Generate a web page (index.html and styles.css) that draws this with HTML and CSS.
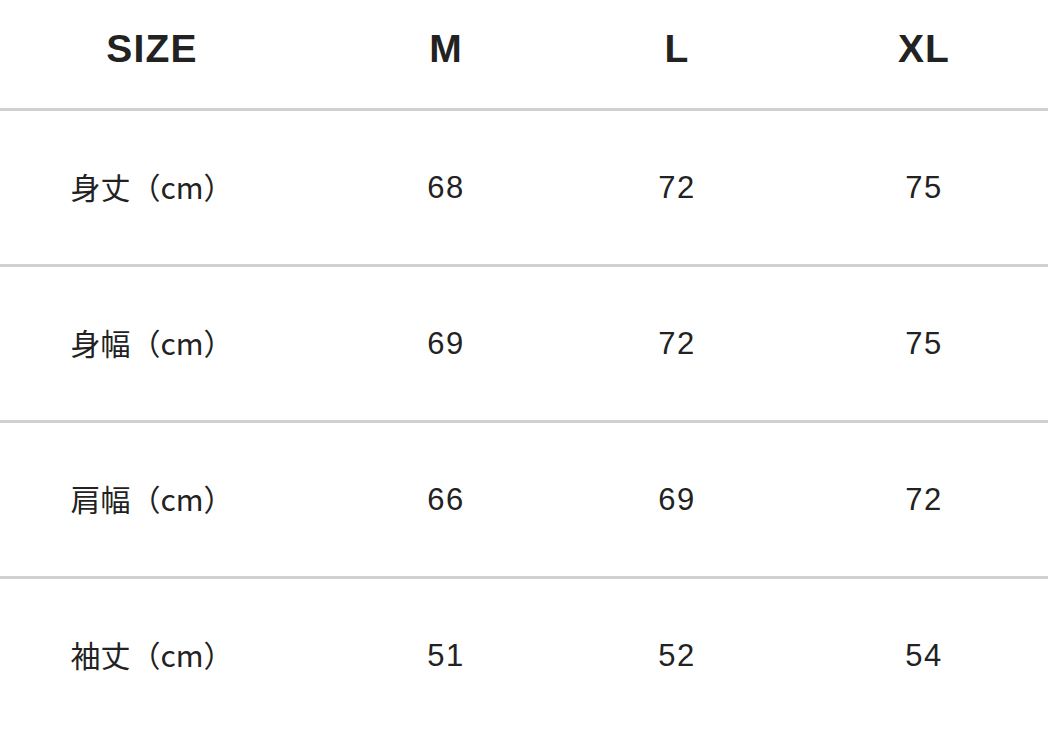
FILE: index.html
```html
<!DOCTYPE html>
<html lang="ja">
<head>
<meta charset="utf-8">
<title>Size chart</title>
<link rel="stylesheet" href="styles.css">
</head>
<body>
<div class="chart">
  <div class="row head">
    <div class="cell c1">SIZE</div>
    <div class="cell c2">M</div>
    <div class="cell c3">L</div>
    <div class="cell c4">XL</div>
  </div>
  <div class="row">
    <div class="cell c1 label">身丈（cm）</div>
    <div class="cell c2">68</div>
    <div class="cell c3">72</div>
    <div class="cell c4">75</div>
  </div>
  <div class="row">
    <div class="cell c1 label">身幅（cm）</div>
    <div class="cell c2">69</div>
    <div class="cell c3">72</div>
    <div class="cell c4">75</div>
  </div>
  <div class="row">
    <div class="cell c1 label">肩幅（cm）</div>
    <div class="cell c2">66</div>
    <div class="cell c3">69</div>
    <div class="cell c4">72</div>
  </div>
  <div class="row">
    <div class="cell c1 label">袖丈（cm）</div>
    <div class="cell c2">51</div>
    <div class="cell c3">52</div>
    <div class="cell c4">54</div>
  </div>
</div>
</body>
</html>
```

FILE: styles.css
```css
html, body {
  margin: 0;
  padding: 0;
  background: #ffffff;
  overflow: hidden;
}

.chart {
  width: 1048px;
  font-family: "Liberation Sans", "Noto Sans CJK JP", sans-serif;
  color: #222222;
}

.row {
  display: grid;
  grid-template-columns: 304px 284px 178px 1fr;
  align-items: center;
  height: 153px;
  border-top: 3px solid #d0d0d0;
  font-size: 31px;
  letter-spacing: 0.05em;
}

.row.head {
  height: 96px;
  padding-bottom: 12px;
  border-top: none;
  font-size: 39px;
  font-weight: bold;
  letter-spacing: 0.03em;
}

.cell {
  text-align: center;
  line-height: 1;
}

.c4 {
  padding-left: 34px;
}

.label {
  font-family: "Noto Sans CJK JP", "Liberation Sans", sans-serif;
  font-size: 30px;
  letter-spacing: 0;
  padding-bottom: 4px;
}
```
